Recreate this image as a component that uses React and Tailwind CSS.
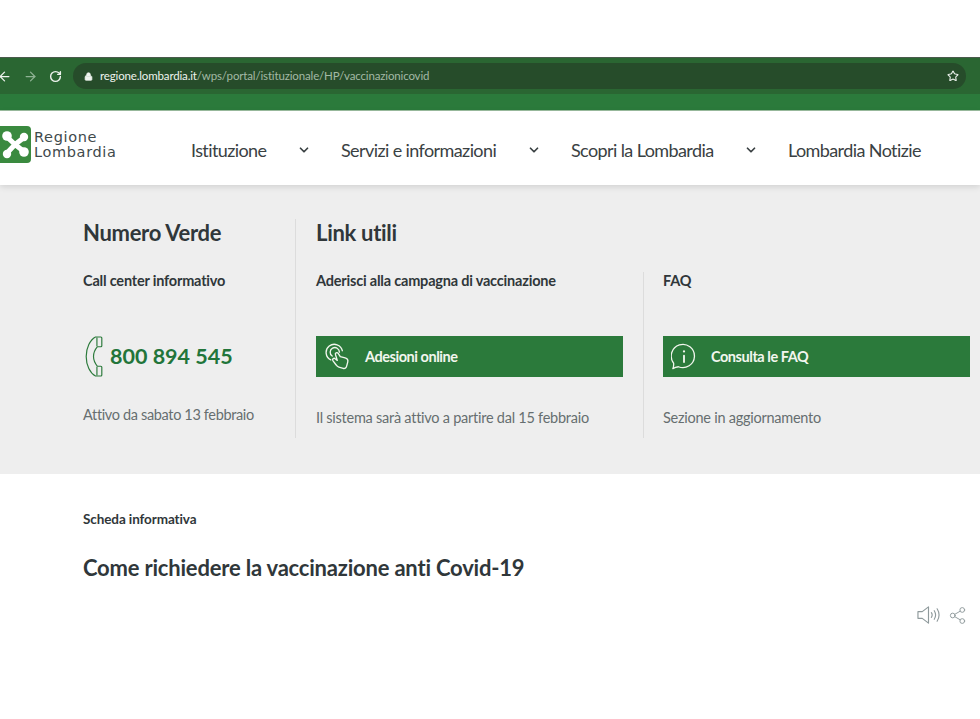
import { ArrowLeft, ArrowRight, ChevronDown, Lock, RotateCw, Share2, Star } from "lucide-react";

const navItems = [
  { label: "Istituzione", width: "w-[150px]", chevron: true },
  { label: "Servizi e informazioni", width: "w-[230px]", chevron: true },
  { label: "Scopri la Lombardia", width: "w-[217px]", chevron: true },
  { label: "Lombardia Notizie", width: "", chevron: false },
];

function LogoMark() {
  return (
    <svg viewBox="0 0 32 37" className="h-[37px] w-[32px] shrink-0">
      <path d="M0 0h27a4 4 0 0 1 4 4v29a4 4 0 0 1-4 4H0z" fill="#3a8a3f" />
      <path d="M15 18.500 7 11M15 18.500l9-7M15 18.500l-8 8.500M15 18.500l9.500 7.500" stroke="#fff" strokeWidth="5" strokeLinecap="round" />
      <circle cx="7" cy="10" r="4.800" fill="#fff" />
      <circle cx="24" cy="11" r="4.200" fill="#fff" />
      <circle cx="7" cy="28" r="4.200" fill="#fff" />
      <circle cx="24" cy="26" r="4.800" fill="#fff" />
    </svg>
  );
}

function PhoneIcon() {
  return (
    <svg viewBox="0 0 18 42" className="h-[41px] w-[18px] shrink-0" fill="none" stroke="#2b7a3b" strokeWidth="1.200" strokeLinejoin="round">
      <path d="M10.500 1h5.500a1 1 0 0 1 1 1v8a1 1 0 0 1-1 1h-3.500C10 14 8.500 17 8.500 21s1.500 7 4 10H16a1 1 0 0 1 1 1v8a1 1 0 0 1-1 1h-5.500C5 38 1 30 1 21S5 4 10.500 1z" />
      <path d="M12 1.500v9M12 31.500v9" />
    </svg>
  );
}

function TouchIcon() {
  return (
    <svg viewBox="0 0 28 28" className="h-[27px] w-[27px] shrink-0" fill="none" stroke="#f2f6ee" strokeWidth="1.400" strokeLinecap="round" strokeLinejoin="round">
      <path d="M7 17.500a8.500 8.500 0 1 1 12-9.500" />
      <path d="M8.500 13.500a4.800 4.800 0 1 1 7.500-4" />
      <path d="M12 12.500c-1-2 1.500-3.500 2.700-1.700l2.200 3.400 5 1.300c2 .6 3.300 2 2.700 4.300l-1.200 4.500c-.4 1.600-1.800 2.500-3.500 2l-4.500-1.300c-1.300-.4-2-1-2.800-2.200l-3.400-4.600c-1-1.600 1-3.100 2.400-1.900l2.200 1.700z" />
    </svg>
  );
}

function InfoBubble() {
  return (
    <svg viewBox="0 0 28 28" className="h-[28px] w-[26px] shrink-0" fill="none" stroke="#f2f6ee" strokeWidth="1.400" strokeLinecap="round" strokeLinejoin="round">
      <path d="M2 26.500c1-2 1-4 .8-6A12.500 12.500 0 1 1 8 24.500c-2 .2-4 .8-6 2z" />
      <path d="M14 12.500v7" strokeWidth="2" />
      <circle cx="14" cy="8" r="1.200" fill="#f2f6ee" stroke="none" />
    </svg>
  );
}

function SpeakerIcon() {
  return (
    <svg viewBox="0 0 24 20" className="h-[20px] w-[23px]" fill="none" stroke="#8f9a9c" strokeWidth="1.200" strokeLinecap="round" strokeLinejoin="round">
      <path d="M1 6.500h4.500L12 1.500v17l-6.500-5H1z" />
      <path d="M15 7.500c1 1.500 1 3.500 0 5M18 5.500c1.700 2.700 1.700 6.300 0 9M21 3.500c2.500 4 2.500 9 0 13" />
    </svg>
  );
}

function ActionButton({ icon, label }) {
  return (
    <div className="flex h-[41px] items-center gap-[14px] bg-[#2b7a3b] pl-[8px] text-[14.500px] font-bold text-[#f2f6ee]">
      {icon}
      <span className="tracking-[-0.45px]">{label}</span>
    </div>
  );
}

export default function App() {
  return (
    <div className="min-h-[719px] bg-white font-['Lato','Liberation_Sans',sans-serif] pt-[57px]">
      {/* browser chrome */}
      <div className="flex h-[37px] items-center border-t border-[#4a5a4c] bg-[#2a6632] pr-[14px] text-[#eef3ee]">
        <ArrowLeft className="ml-[-3px] h-[15px] w-[15px]" strokeWidth={2} />
        <ArrowRight className="ml-[11px] h-[15px] w-[15px] text-[#8fb394]" strokeWidth={2} />
        <RotateCw className="ml-[11px] h-[13px] w-[13px]" strokeWidth={2.600} />
        <div className="ml-[11px] flex h-[26px] flex-1 items-center rounded-full bg-[#264c2a] pl-[11px] pr-[6px] text-[11.500px]">
          <Lock className="h-[9px] w-[9px] fill-current" />
          <span className="ml-[7px] tracking-[-0.15px] text-[#eef3ee]">regione.lombardia.it</span>
          <span className="tracking-[-0.15px] text-[#a3b9a5]">/wps/portal/istituzionale/HP/vaccinazionicovid</span>
          <Star className="ml-auto mr-[1px] h-[12px] w-[12px]" strokeWidth={2.200} />
        </div>
      </div>
      <div className="h-[17px] border-b border-[#9bbd9f] bg-[#2b7a3b]" />

      {/* site header */}
      <header className="relative flex h-[74px] items-center shadow-[0_2px_6px_rgba(0,0,0,0.12)]">
        <div className="mb-[7px] flex w-[191px] items-center">
          <LogoMark />
          <div className="ml-[2px] font-['DejaVu_Sans',sans-serif] text-[14.500px] leading-[15px] tracking-[0.65px] text-[#3f4a4c]">
            <div>Regione</div>
            <div>Lombardia</div>
          </div>
        </div>
        <nav className="mt-[4px] flex items-center text-[18px] tracking-[-0.6px] text-[#3a4143]">
          {navItems.map((item) => (
            <div key={item.label} className={`flex items-center justify-between pr-[32px] ${item.width}`}>
              <span className="whitespace-nowrap">{item.label}</span>
              {item.chevron ? <ChevronDown className="mr-[-2px] h-[14px] w-[14px]" strokeWidth={3} /> : null}
            </div>
          ))}
        </nav>
      </header>

      {/* numero verde + link utili */}
      <section className="flex h-[289px] bg-[#eeeeee] pl-[83px] pr-[10px] pt-[34px] text-[#30373a]">
        <div className="h-[219px] w-[213px] border-r border-[#dcdcdc]">
          <h2 className="text-[22px] font-bold leading-[28px] tracking-[-0.3px]">Numero Verde</h2>
          <p className="mt-[25px] text-[14.500px] font-bold leading-[18px] tracking-[-0.2px]">Call center informativo</p>
          <div className="mt-[46px] flex h-[41px] items-center gap-[7px] pl-[2px]">
            <PhoneIcon />
            <span className="text-[21.500px] font-bold text-[#22753a]">800 894 545</span>
          </div>
          <p className="mt-[28px] text-[14.500px] leading-[20px] tracking-[-0.35px] text-[#666e70]">Attivo da sabato 13 febbraio</p>
        </div>
        <div className="flex-1 pl-[20px]">
          <h2 className="text-[22px] font-bold leading-[28px] tracking-[-0.3px]">Link utili</h2>
          <div className="mt-[25px] flex h-[166px]">
            <div className="w-[328px] border-r border-[#dcdcdc] pr-[20px]">
              <p className="text-[14.500px] font-bold leading-[18px] tracking-[-0.2px]">Aderisci alla campagna di vaccinazione</p>
              <div className="mt-[46px]">
                <ActionButton icon={<TouchIcon />} label="Adesioni online" />
              </div>
              <p className="mt-[31px] text-[14.500px] leading-[20px] tracking-[-0.25px] text-[#666e70]">Il sistema sarà attivo a partire dal 15 febbraio</p>
            </div>
            <div className="flex-1 pl-[19px]">
              <p className="text-[14.500px] font-bold leading-[18px] tracking-[-0.2px]">FAQ</p>
              <div className="mt-[46px]">
                <ActionButton icon={<InfoBubble />} label="Consulta le FAQ" />
              </div>
              <p className="mt-[31px] text-[14.500px] leading-[20px] tracking-[-0.25px] text-[#666e70]">Sezione in aggiornamento</p>
            </div>
          </div>
        </div>
      </section>

      {/* scheda */}
      <section className="pl-[83px] pr-[13px] pt-[36px] text-[#30373a]">
        <p className="text-[13.500px] font-bold leading-[18px] tracking-[-0.1px]">Scheda informativa</p>
        <h1 className="mt-[25px] text-[22px] font-bold leading-[30px] tracking-[-0.2px]">Come richiedere la vaccinazione anti Covid-19</h1>
        <div className="mt-[22px] flex items-center justify-end gap-[8px]">
          <SpeakerIcon />
          <Share2 className="h-[19px] w-[19px] text-[#8f9a9c]" strokeWidth={1.200} />
        </div>
      </section>
    </div>
  );
}
